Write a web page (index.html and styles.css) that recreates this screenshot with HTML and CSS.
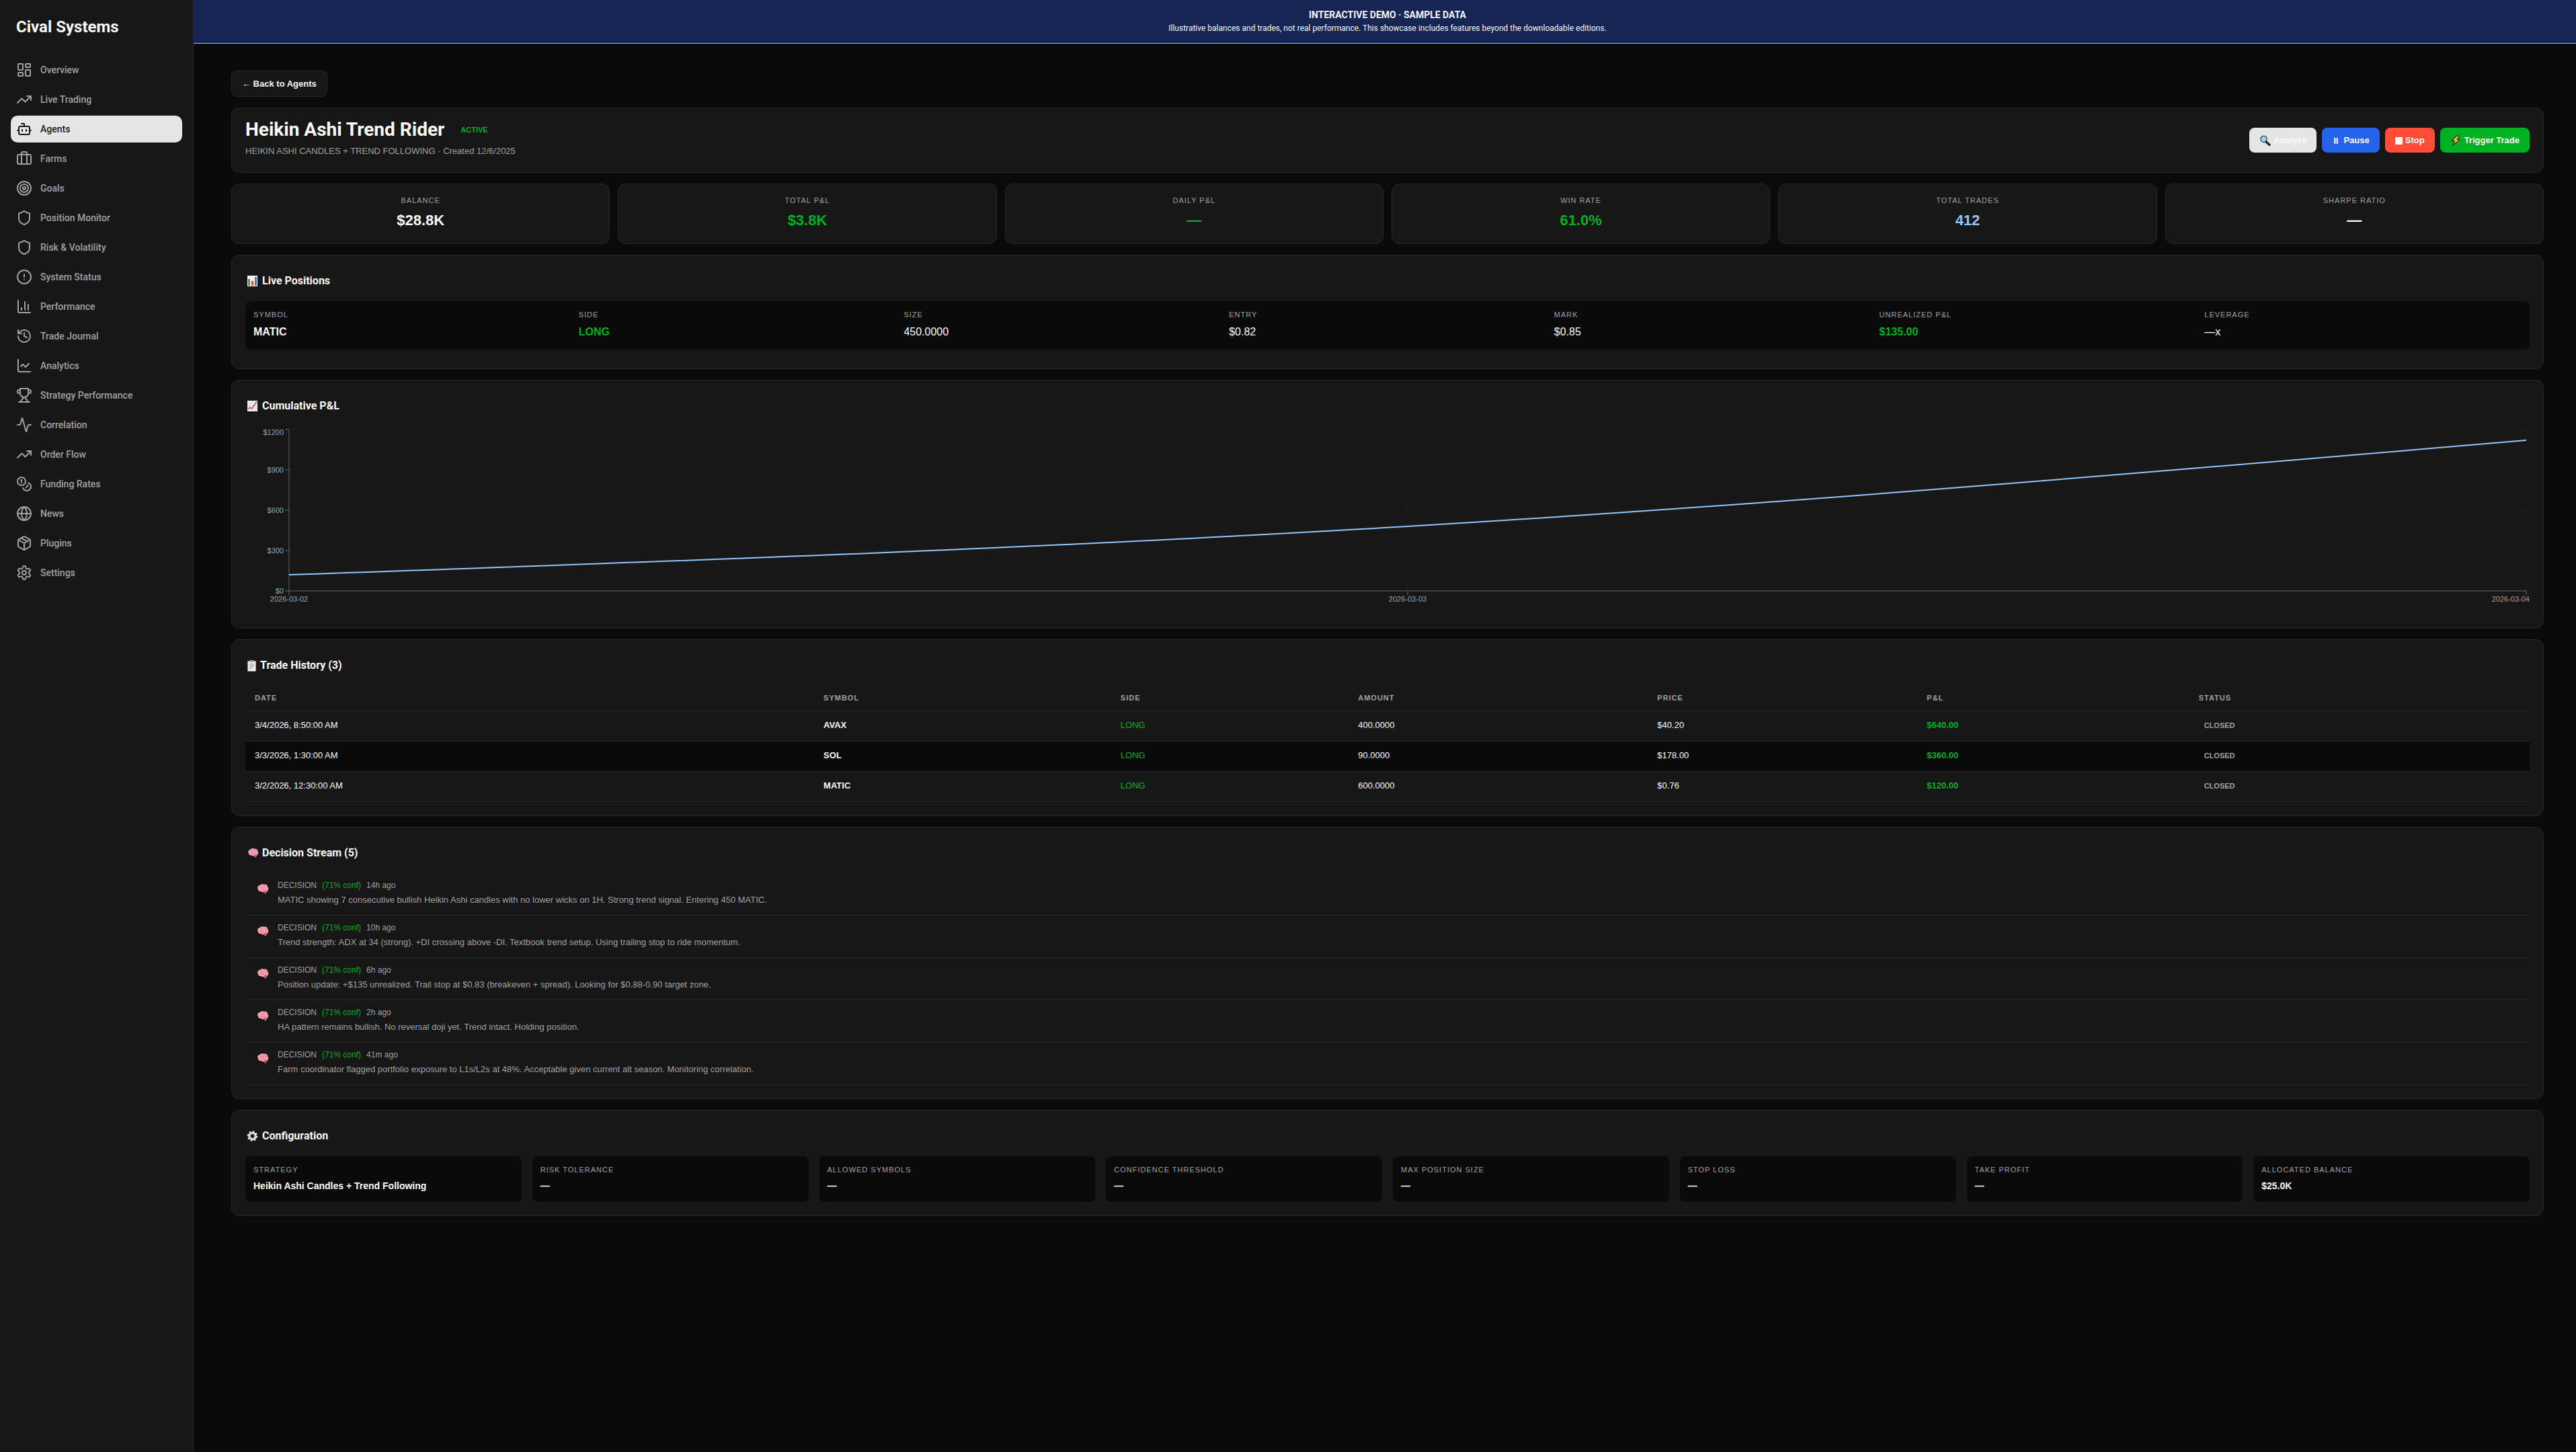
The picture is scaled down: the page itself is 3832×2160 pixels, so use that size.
FILE: index.html
```html
<!DOCTYPE html>
<html lang="en">
<head>
<meta charset="utf-8">
<meta name="viewport" content="width=device-width, initial-scale=1">
<title>Heikin Ashi Trend Rider - Cival Systems</title>
<link rel="stylesheet" href="styles.css">
</head>
<body>
<svg class="defs" width="0" height="0" aria-hidden="true">
  <symbol id="brain" viewBox="0 0 20 18">
    <path d="M2 10C0 7 2 3.500 5 3.500C6.500 1 10 .8 12 2C15 1 18 3 18 5.500C20 8 19.500 11 18 12C18 14 16.500 15 15 14.500L15.500 17C14 17.800 12.500 16.500 12 14.500C10 15.500 8 15 7.500 13.500C5 14 2.500 13 2 10Z" fill="#f5a3b3"/>
    <path d="M12 12C14 13 17 13 18.500 11C18.500 14 16.500 15 15 14.500L15.500 17C14 17.800 12.500 16.500 12 14.500Z" fill="#dc4f68"/>
    <path d="M4 8Q6 5 8 7.500T11 5M6 11Q9 9 11 11T16 9M13 3Q12 6 15 6T17 8M8 3.500L9 5" fill="none" stroke="#d9738a"/>
  </symbol>
</svg>
<div class="app">
  <aside class="sidebar">
    <div class="logo">Cival Systems</div>
    <nav class="nav" aria-label="Main">
      <a href="#"><svg viewBox="0 0 24 24"><rect width="7" height="9" x="3" y="3" rx="1"/><rect width="7" height="5" x="14" y="3" rx="1"/><rect width="7" height="9" x="14" y="12" rx="1"/><rect width="7" height="5" x="3" y="16" rx="1"/></svg>Overview</a>
      <a href="#"><svg viewBox="0 0 24 24"><path d="M22 7 13.500 15.500 8.500 10.500 2 17"/><path d="M16 7h6v6"/></svg>Live Trading</a>
      <a href="#" class="active" aria-current="page"><svg viewBox="0 0 24 24"><path d="M12 8V4H8"/><rect width="16" height="12" x="4" y="8" rx="2"/><path d="M2 14h2M20 14h2M15 13v2M9 13v2"/></svg>Agents</a>
      <a href="#"><svg viewBox="0 0 24 24"><rect width="20" height="14" x="2" y="6" rx="2"/><path d="M16 20V4a2 2 0 0 0-2-2h-4a2 2 0 0 0-2 2v16"/></svg>Farms</a>
      <a href="#"><svg viewBox="0 0 24 24"><circle cx="12" cy="12" r="10"/><circle cx="12" cy="12" r="6"/><circle cx="12" cy="12" r="2"/></svg>Goals</a>
      <a href="#"><svg viewBox="0 0 24 24"><path d="M20 13c0 5-3.500 7.500-7.660 8.950a1 1 0 0 1-.67-.01C7.500 20.500 4 18 4 13V6a1 1 0 0 1 1-1c2 0 4.500-1.200 6.240-2.720a1.170 1.170 0 0 1 1.520 0C14.510 3.810 17 5 19 5a1 1 0 0 1 1 1z"/></svg>Position Monitor</a>
      <a href="#"><svg viewBox="0 0 24 24"><path d="M20 13c0 5-3.500 7.500-7.660 8.950a1 1 0 0 1-.67-.01C7.500 20.500 4 18 4 13V6a1 1 0 0 1 1-1c2 0 4.500-1.200 6.240-2.720a1.170 1.170 0 0 1 1.520 0C14.510 3.810 17 5 19 5a1 1 0 0 1 1 1z"/></svg>Risk &amp; Volatility</a>
      <a href="#"><svg viewBox="0 0 24 24"><circle cx="12" cy="12" r="10"/><path d="M12 8v4M12 16h.01"/></svg>System Status</a>
      <a href="#"><svg viewBox="0 0 24 24"><path d="M3 3v16a2 2 0 0 0 2 2h16M18 17V9M13 17V5M8 17v-3"/></svg>Performance</a>
      <a href="#"><svg viewBox="0 0 24 24"><path d="M3 12a9 9 0 1 0 9-9 9.750 9.750 0 0 0-6.740 2.740L3 8"/><path d="M3 3v5h5M12 7v5l4 2"/></svg>Trade Journal</a>
      <a href="#"><svg viewBox="0 0 24 24"><path d="M3 3v16a2 2 0 0 0 2 2h16"/><path d="m19 9-5 5-4-4-3 3"/></svg>Analytics</a>
      <a href="#"><svg viewBox="0 0 24 24"><path d="M6 9H4.500a2.500 2.500 0 0 1 0-5H6M18 9h1.500a2.500 2.500 0 0 0 0-5H18M4 22h16"/><path d="M10 14.660V17c0 .55-.47.98-.97 1.210C7.850 18.750 7 20.240 7 22M14 14.660V17c0 .55.47.98.97 1.210C16.150 18.750 17 20.240 17 22M18 2H6v7a6 6 0 0 0 12 0V2Z"/></svg>Strategy Performance</a>
      <a href="#"><svg viewBox="0 0 24 24"><path d="M22 12h-2.480a2 2 0 0 0-1.930 1.460l-2.350 8.360a.25.25 0 0 1-.48 0L9.240 2.180a.25.25 0 0 0-.48 0l-2.350 8.360A2 2 0 0 1 4.490 12H2"/></svg>Correlation</a>
      <a href="#"><svg viewBox="0 0 24 24"><path d="M22 7 13.500 15.500 8.500 10.500 2 17"/><path d="M16 7h6v6"/></svg>Order Flow</a>
      <a href="#"><svg viewBox="0 0 24 24"><circle cx="8" cy="8" r="6"/><path d="M18.090 10.370A6 6 0 1 1 10.340 18M7 6h1v4M16.710 13.880l.7.71-2.820 2.820"/></svg>Funding Rates</a>
      <a href="#"><svg viewBox="0 0 24 24"><circle cx="12" cy="12" r="10"/><path d="M12 2a14.500 14.500 0 0 0 0 20 14.500 14.500 0 0 0 0-20M2 12h20"/></svg>News</a>
      <a href="#"><svg viewBox="0 0 24 24"><path d="M11 21.730a2 2 0 0 0 2 0l7-4A2 2 0 0 0 21 16V8a2 2 0 0 0-1-1.730l-7-4a2 2 0 0 0-2 0l-7 4A2 2 0 0 0 3 8v8a2 2 0 0 0 1 1.730zM12 22V12M3.290 7 12 12l8.710-5M7.500 4.270l9 5.150"/></svg>Plugins</a>
      <a href="#"><svg viewBox="0 0 24 24"><path d="M12.220 2h-.44a2 2 0 0 0-2 2v.18a2 2 0 0 1-1 1.730l-.43.25a2 2 0 0 1-2 0l-.15-.08a2 2 0 0 0-2.730.73l-.22.38a2 2 0 0 0 .73 2.730l.15.1a2 2 0 0 1 1 1.720v.51a2 2 0 0 1-1 1.740l-.15.09a2 2 0 0 0-.73 2.730l.22.38a2 2 0 0 0 2.730.73l.15-.08a2 2 0 0 1 2 0l.43.25a2 2 0 0 1 1 1.730V20a2 2 0 0 0 2 2h.44a2 2 0 0 0 2-2v-.18a2 2 0 0 1 1-1.730l.43-.25a2 2 0 0 1 2 0l.15.08a2 2 0 0 0 2.730-.73l.22-.39a2 2 0 0 0-.73-2.730l-.15-.08a2 2 0 0 1-1-1.740v-.5a2 2 0 0 1 1-1.740l.15-.09a2 2 0 0 0 .73-2.730l-.22-.38a2 2 0 0 0-2.730-.73l-.15.08a2 2 0 0 1-2 0l-.43-.25a2 2 0 0 1-1-1.730V4a2 2 0 0 0-2-2z"/><circle cx="12" cy="12" r="3"/></svg>Settings</a>
    </nav>
  </aside>

  <div class="page">
    <div class="banner" role="note">
      <strong>INTERACTIVE DEMO · SAMPLE DATA</strong>
      <span>Illustrative balances and trades, not real performance. This showcase includes features beyond the downloadable editions.</span>
    </div>

    <main class="content">
      <button class="back" type="button">← Back to Agents</button>

      <header class="card hero">
        <div>
          <div class="title-row"><h1>Heikin Ashi Trend Rider</h1><span class="badge">ACTIVE</span></div>
          <p class="subtitle">HEIKIN ASHI CANDLES + TREND FOLLOWING · Created 12/6/2025</p>
        </div>
        <div class="actions">
          <button type="button" class="btn analyze"><svg width="17" height="16" viewBox="0 0 17 16"><path d="M9.500 9.500 15 14.500" stroke="#1b2a30" stroke-width="3.500" stroke-linecap="round"/><circle cx="6.500" cy="5.800" r="4.600" fill="#9fd0f3" stroke="#243c4a" stroke-width="1.300"/></svg>Analyze</button>
          <button type="button" class="btn pause"><svg width="13" height="16" viewBox="0 0 13 16"><path d="M3 4h2.500v9H3zM6.500 4H9v9H6.500z" fill="#dbe6fd"/></svg>Pause</button>
          <button type="button" class="btn stop"><svg width="11" height="16" viewBox="0 0 11 16"><path d="M0 3h11v11H0z" fill="#fff"/></svg>Stop</button>
          <button type="button" class="btn trigger"><svg width="17" height="16" viewBox="0 0 17 16"><path d="M9.500 1 2 8.500h4.500L4 15l10.500-8.500H10L13 1Z" fill="#fbc53a" stroke="#3a2c08" stroke-width="1.200" stroke-linejoin="round"/></svg>Trigger Trade</button>
        </div>
      </header>

      <section class="stats" aria-label="Summary">
        <div class="card stat"><div class="label">BALANCE</div><div class="value">$28.8K</div></div>
        <div class="card stat"><div class="label">TOTAL P&amp;L</div><div class="value green">$3.8K</div></div>
        <div class="card stat"><div class="label">DAILY P&amp;L</div><div class="value green">—</div></div>
        <div class="card stat"><div class="label">WIN RATE</div><div class="value green">61.0%</div></div>
        <div class="card stat"><div class="label">TOTAL TRADES</div><div class="value blue">412</div></div>
        <div class="card stat"><div class="label">SHARPE RATIO</div><div class="value">—</div></div>
      </section>

      <section class="card">
        <h2><svg width="21" height="20" viewBox="0 0 21 20"><path d="M3 2h15v16H3z" fill="#f4f4f4"/><path d="M4 7h3v10H4z" fill="#2fa84c"/><path d="M9 10h3v7H9z" fill="#e2483d"/><path d="M14 4h3v13h-3z" fill="#2f82d8"/></svg>Live Positions</h2>
        <div class="position">
          <div><div class="label">SYMBOL</div><div class="pvalue strong">MATIC</div></div>
          <div><div class="label">SIDE</div><div class="pvalue strong green">LONG</div></div>
          <div><div class="label">SIZE</div><div class="pvalue">450.0000</div></div>
          <div><div class="label">ENTRY</div><div class="pvalue">$0.82</div></div>
          <div><div class="label">MARK</div><div class="pvalue">$0.85</div></div>
          <div><div class="label">UNREALIZED P&amp;L</div><div class="pvalue strong green">$135.00</div></div>
          <div><div class="label">LEVERAGE</div><div class="pvalue">—x</div></div>
        </div>
      </section>

      <section class="card">
        <h2><svg width="21" height="20" viewBox="0 0 21 20"><path d="M3 2h15v16H3z" fill="#f4f4f4"/><path d="M3 6h15M3 10h15M3 14h15M7 2v16M11 2v16M15 2v16" stroke="#cfd5da"/><path d="M4 15 7 12 9.500 14 17 3.500" fill="none" stroke="#e2483d" stroke-width="1.500"/></svg>Cumulative P&amp;L</h2>
        <svg class="chart" role="img" aria-label="Cumulative P&amp;L by day">
          <svg class="plot" x="65" y="5" height="240">
            <g class="grid">
              <line x1="0" x2="100%" y1="0" y2="0"/><line x1="0" x2="100%" y1="60" y2="60"/><line x1="0" x2="100%" y1="120" y2="120"/><line x1="0" x2="100%" y1="180" y2="180"/>
              <line x1="50%" x2="50%" y1="0" y2="240"/><line x1="100%" x2="100%" y1="0" y2="240"/>
            </g>
            <g class="axis">
              <line x1="0" x2="100%" y1="240" y2="240"/><line x1="0" x2="0" y1="0" y2="246"/>
              <line x1="-6" x2="0" y1="0" y2="0"/><line x1="-6" x2="0" y1="60" y2="60"/><line x1="-6" x2="0" y1="120" y2="120"/><line x1="-6" x2="0" y1="180" y2="180"/><line x1="-6" x2="0" y1="240" y2="240"/>
              <line x1="50%" x2="50%" y1="240" y2="246"/><line x1="100%" x2="100%" y1="240" y2="246"/>
            </g>
            <g class="ticks" text-anchor="end">
              <text x="-8" y="8">$1200</text><text x="-8" y="64">$900</text><text x="-8" y="124">$600</text><text x="-8" y="184">$300</text><text x="-8" y="244">$0</text>
            </g>
            <g class="ticks">
              <text x="0" y="256" text-anchor="middle">2026-03-02</text><text x="50%" y="256" text-anchor="middle">2026-03-03</text><text x="100%" y="256" dx="5" text-anchor="end">2026-03-04</text>
            </g>
            <svg width="100%" height="240" viewBox="0 0 600 240" preserveAspectRatio="none">
              <path class="series" d="M0 216C100 196.670 200 177.330 300 144C400 110.670 500 63.330 600 16"/>
            </svg>
          </svg>
        </svg>
      </section>

      <section class="card">
        <h2><svg width="18" height="20" viewBox="0 0 18 20"><path d="M3 3h13v16H3z" fill="#a88a68"/><path d="M4 4h11v14H4z" fill="#eef0f2"/><path d="M6.500 2h6v3h-6z" fill="#9aa4ac"/><path d="M6 8h7M6 11h7M6 14h5" stroke="#6f7a86"/></svg>Trade History (3)</h2>
        <table class="trades">
          <colgroup><col class="c-date"><col class="c-symbol"><col class="c-side"><col class="c-amount"><col class="c-price"><col class="c-pnl"><col></colgroup>
          <thead><tr><th>DATE</th><th>SYMBOL</th><th>SIDE</th><th>AMOUNT</th><th>PRICE</th><th>P&amp;L</th><th>STATUS</th></tr></thead>
          <tbody>
            <tr><td>3/4/2026, 8:50:00 AM</td><td class="strong">AVAX</td><td class="green">LONG</td><td>400.0000</td><td>$40.20</td><td class="green strong">$640.00</td><td><span class="status">CLOSED</span></td></tr>
            <tr><td>3/3/2026, 1:30:00 AM</td><td class="strong">SOL</td><td class="green">LONG</td><td>90.0000</td><td>$178.00</td><td class="green strong">$360.00</td><td><span class="status">CLOSED</span></td></tr>
            <tr><td>3/2/2026, 12:30:00 AM</td><td class="strong">MATIC</td><td class="green">LONG</td><td>600.0000</td><td>$0.76</td><td class="green strong">$120.00</td><td><span class="status">CLOSED</span></td></tr>
          </tbody>
        </table>
      </section>

      <section class="card">
        <h2><svg width="21" height="20"><use href="#brain" x="3" y="2" width="17" height="15"/></svg>Decision Stream (5)</h2>
        <ul class="stream">
          <li><svg class="avatar"><use href="#brain" width="18" height="16"/></svg><div><div class="meta"><span>DECISION</span><span class="green">(71% conf)</span><span>14h ago</span></div><p>MATIC showing 7 consecutive bullish Heikin Ashi candles with no lower wicks on 1H. Strong trend signal. Entering 450 MATIC.</p></div></li>
          <li><svg class="avatar"><use href="#brain" width="18" height="16"/></svg><div><div class="meta"><span>DECISION</span><span class="green">(71% conf)</span><span>10h ago</span></div><p>Trend strength: ADX at 34 (strong). +DI crossing above -DI. Textbook trend setup. Using trailing stop to ride momentum.</p></div></li>
          <li><svg class="avatar"><use href="#brain" width="18" height="16"/></svg><div><div class="meta"><span>DECISION</span><span class="green">(71% conf)</span><span>6h ago</span></div><p>Position update: +$135 unrealized. Trail stop at $0.83 (breakeven + spread). Looking for $0.88-0.90 target zone.</p></div></li>
          <li><svg class="avatar"><use href="#brain" width="18" height="16"/></svg><div><div class="meta"><span>DECISION</span><span class="green">(71% conf)</span><span>2h ago</span></div><p>HA pattern remains bullish. No reversal doji yet. Trend intact. Holding position.</p></div></li>
          <li><svg class="avatar"><use href="#brain" width="18" height="16"/></svg><div><div class="meta"><span>DECISION</span><span class="green">(71% conf)</span><span>41m ago</span></div><p>Farm coordinator flagged portfolio exposure to L1s/L2s at 48%. Acceptable given current alt season. Monitoring correlation.</p></div></li>
        </ul>
      </section>

      <section class="card">
        <h2><svg width="21" height="20" viewBox="0 0 21 20"><circle cx="10.500" cy="10" r="4.500" fill="none" stroke="#e8e8e8" stroke-width="3.500"/><circle cx="10.500" cy="10" r="6.800" fill="none" stroke="#e8e8e8" stroke-width="2" stroke-dasharray="2.670 2.670"/><circle cx="10.500" cy="10" r="4" fill="none" stroke="#8a8a8a" stroke-width=".6"/></svg>Configuration</h2>
        <div class="config">
          <div class="tile"><div class="label">STRATEGY</div><div class="cvalue">Heikin Ashi Candles + Trend Following</div></div>
          <div class="tile"><div class="label">RISK TOLERANCE</div><div class="cvalue">—</div></div>
          <div class="tile"><div class="label">ALLOWED SYMBOLS</div><div class="cvalue">—</div></div>
          <div class="tile"><div class="label">CONFIDENCE THRESHOLD</div><div class="cvalue">—</div></div>
          <div class="tile"><div class="label">MAX POSITION SIZE</div><div class="cvalue">—</div></div>
          <div class="tile"><div class="label">STOP LOSS</div><div class="cvalue">—</div></div>
          <div class="tile"><div class="label">TAKE PROFIT</div><div class="cvalue">—</div></div>
          <div class="tile"><div class="label">ALLOCATED BALANCE</div><div class="cvalue">$25.0K</div></div>
        </div>
      </section>
    </main>
  </div>
</div>
</body>
</html>
```
FILE: styles.css
```css
:root {
  --bg: #0a0a0a;
  --card: #171717;
  --border: #282828;
  --text: #fafafa;
  --muted: #a1a1a1;
  --green: #00b124;
  --blue: #93c5fd;
  --display: Roboto, "Liberation Sans", sans-serif;
  --body: "Liberation Sans", Arial, sans-serif;
}

* { box-sizing: border-box; }
body { margin: 0; background: var(--bg); color: var(--text); font: 14px/20px var(--body); }
h1, h2, p, ul { margin: 0; padding: 0; }
button { font-family: inherit; cursor: pointer; }
.defs { display: block; }

.app { display: flex; min-height: 100vh; }

/* Sidebar */
.sidebar { flex: none; width: 288px; padding: 24px 16px; background: var(--card); border-right: 1px solid var(--border); font-family: var(--display); }
.logo { padding: 0 8px; font-size: 24px; line-height: 32px; font-weight: 700; }
.nav { display: grid; gap: 4px; margin-top: 28px; }
.nav a { display: flex; align-items: center; gap: 12px; height: 40px; padding: 0 8px; border-radius: 10px; color: var(--muted); font-weight: 500; text-decoration: none; }
.nav a.active { background: #e5e5e5; color: #171717; }
.nav svg { flex: none; width: 24px; height: 24px; fill: none; stroke: currentColor; stroke-width: 2; stroke-linecap: round; stroke-linejoin: round; }

/* Page */
.page { flex: 1; min-width: 0; }
.banner { display: flex; flex-direction: column; align-items: center; padding: 12px 8px 12px 16px; background: #172554; border-bottom: 1px solid var(--blue); color: #eff6ff; font-family: var(--display); text-align: center; }
.banner span { font-size: 12px; }
.content { display: grid; gap: 16px; padding: 40px 48px 48px 56px; }

.card { min-width: 0; padding: 20px; background: var(--card); border: 1px solid var(--border); border-radius: 12px; }
h2 { display: flex; align-items: center; gap: 4px; margin-bottom: 12px; font: 700 16px/36px var(--display); }
.green { color: var(--green); }
.blue { color: var(--blue); }
.strong { font-weight: 700; }
.label { color: var(--muted); font-size: 11px; line-height: 16px; letter-spacing: 1px; }

.back { justify-self: start; padding: 8px 15px; background: var(--card); border: 1px solid var(--border); border-radius: 8px; color: var(--text); font-size: 13px; line-height: 21px; font-weight: 600; }

.hero { display: flex; align-items: center; justify-content: space-between; gap: 24px; }
.title-row { display: flex; align-items: center; gap: 12px; margin-bottom: 8px; }
h1 { font: 700 28px/24px var(--display); }
.badge { padding: 0 12px; color: var(--green); font-size: 11px; font-weight: 600; }
.subtitle { color: var(--muted); font-size: 13px; line-height: 23px; }
.actions { display: flex; gap: 8px; }
.btn { display: flex; align-items: center; gap: 4px; padding: 8px 15px; border: 0; border-radius: 8px; color: #fafafa; font-size: 13px; line-height: 21px; font-weight: 600; }
.analyze { background: #e5e5e5; }
.pause { background: #2563eb; }
.stop { background: #ff4d37; }
.trigger { background: #00b124; }

.stats { display: grid; grid-template-columns: repeat(6, minmax(0, 1fr)); gap: 12px; }
.stat { padding: 16px; text-align: center; }
.value { margin-top: 4px; font-size: 22px; line-height: 36px; font-weight: 700; }

.position { display: grid; grid-template-columns: repeat(7, minmax(0, 1fr)); gap: 12px; margin-bottom: 8px; padding: 12px; background: var(--bg); border-radius: 8px; }
.pvalue { margin-top: 4px; font-size: 16px; line-height: 28px; }

/* Chart */
.chart { display: block; width: 100%; height: 280px; overflow: visible; }
.plot { width: calc(100% - 70px); overflow: visible; }
.grid line { stroke: #262626; stroke-dasharray: 3 3; }
.axis line { stroke: #666; }
.ticks { fill: var(--muted); font-size: 11px; }
.series { fill: none; stroke: var(--blue); stroke-width: 2; vector-effect: non-scaling-stroke; }

/* Trades */
.trades { width: 100%; table-layout: fixed; border-collapse: collapse; font-size: 13px; }
.trades th { height: 37px; padding: 0 14px; border-bottom: 1px solid var(--border); color: var(--muted); font-size: 11px; font-weight: 600; letter-spacing: 1px; text-align: left; }
.trades td { height: 45px; padding: 0 14px 2px; border-bottom: 1px solid var(--border); }
.trades tbody tr:nth-child(even) { background: var(--bg); }
.c-date { width: 24.9%; }
.c-symbol { width: 13%; }
.c-side { width: 10.4%; }
.c-amount { width: 13.1%; }
.c-price { width: 11.8%; }
.c-pnl { width: 11.9%; }
.status { padding: 0 8px; color: var(--muted); font-size: 11px; font-weight: 600; }

/* Decision stream */
.stream { list-style: none; }
.stream li { display: flex; gap: 10px; padding: 8px 14px 10px; border-bottom: 1px solid var(--border); color: var(--muted); }
.avatar { flex: none; width: 24px; height: 24px; padding: 7px 3px 0; }
.meta { display: flex; gap: 8px; font-size: 12px; line-height: 20px; }
.stream p { font-size: 13px; line-height: 24px; }

/* Configuration */
.config { display: grid; grid-template-columns: repeat(8, minmax(0, 1fr)); gap: 16px; }
.tile { padding: 12px; background: var(--bg); border-radius: 8px; }
.cvalue { margin-top: 4px; line-height: 24px; font-weight: 600; }
```
